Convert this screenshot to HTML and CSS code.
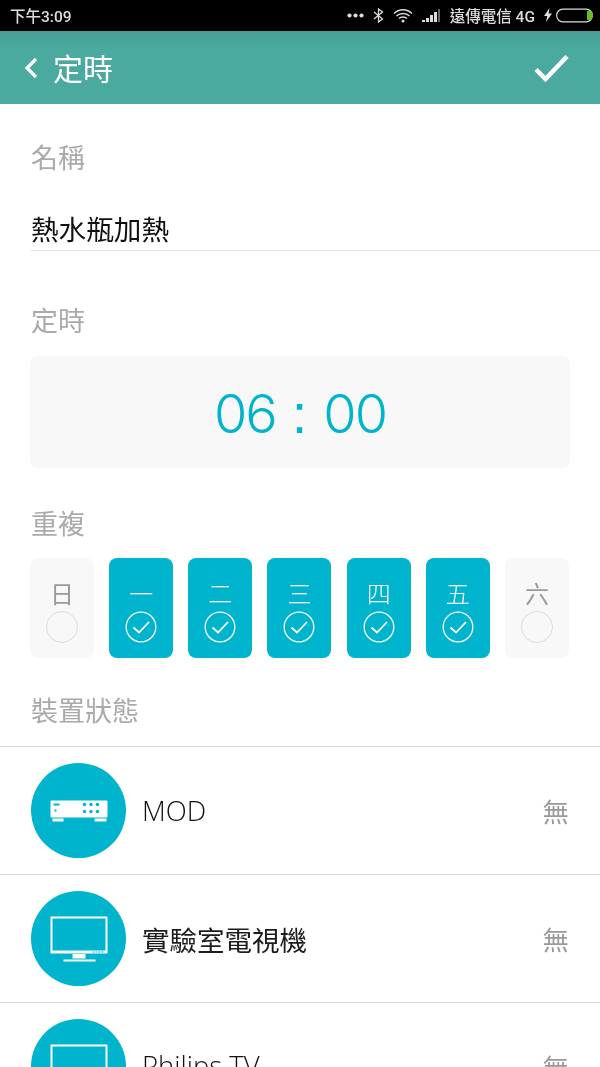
FILE: index.html
```html
<!DOCTYPE html>
<html lang="zh-Hant">

<head>
    <meta charset="UTF-8">
    <meta name="viewport" content="width=device-width, initial-scale=1.0">
    <title>定時</title>
    <link rel="stylesheet" href="styles.css">
</head>

<body>
    <div class="statusbar">
        <span class="clock">下午3:09</span>
        <div class="status-right">
            <svg class="st-dots" width="17" height="5" viewBox="0 0 17 5"><circle cx="2.5" cy="2.5" r="2.1"/><circle cx="8.5" cy="2.5" r="2.1"/><circle cx="14.5" cy="2.5" r="2.1"/></svg>
            <svg class="st-bt" width="11" height="15" viewBox="0 0 11 15"><path d="M1 4l8.5 7L5.5 14V1l4 3L1 11" fill="none" stroke="#ddd" stroke-width="1.3"/></svg>
            <svg class="st-wifi" width="20" height="15" viewBox="0 0 20 15"><g fill="none" stroke="#ddd" stroke-width="1.5"><path d="M1 5.5c5-5 13-5 18 0"/><path d="M3.5 8c3.500-3.500 9.500-3.500 13 0"/><path d="M6 10.500c2-2 6-2 8 0"/></g><circle cx="10" cy="13" r="1.500" fill="#ddd"/></svg>
            <svg class="st-signal" width="19" height="13" viewBox="0 0 19 13"><path d="M0 11h3v2H0zM4 9h3v4H4zM8 6h3v7H8zM12 3h3v10h-3z" fill="#ddd"/><path d="M16 0h2v13h-2z" fill="#666"/></svg>
            <span class="carrier">遠傳電信 4G</span>
            <svg class="st-bolt" width="10" height="14" viewBox="0 0 10 14"><path d="M6.500 0L1 8h3.200L3 14l6-8.500H5.600z" fill="#ddd"/></svg>
            <svg class="st-batt" width="37" height="15" viewBox="0 0 37 15"><rect x=".7" y="1.200" width="35.600" height="12.600" rx="6" fill="none" stroke="#ddd" stroke-width="1.200"/><path d="M31 3h1.500a4.500 4.500 0 0 1 0 9H31z" fill="#5fc31f"/></svg>
        </div>
    </div>

    <header class="topbar">
        <svg class="back" width="14" height="22" viewBox="0 0 14 22"><path d="M12 2l-9 9 9 9" fill="none" stroke="#fff" stroke-width="3.200"/></svg>
        <span class="topbar-title">定時</span>
        <svg class="done" width="38" height="30" viewBox="0 0 38 30"><path d="M3 16.500l9.500 9.500L34 3.500" fill="none" stroke="#fff" stroke-width="4.500"/></svg>
    </header>

    <div class="label label-name">名稱</div>
    <div class="name-input">熱水瓶加熱</div>

    <div class="label label-time">定時</div>
    <div class="time-box">
        <span>06</span>
        <span class="time-colon">:</span>
        <span>00</span>
    </div>

    <div class="label label-repeat">重複</div>
    <div class="days">
        <div class="day">
            <span class="day-name">日</span>
            <span class="day-off"></span>
        </div>
        <div class="day on">
            <span class="day-name">一</span>
            <svg class="tick" width="32" height="32" viewBox="0 0 32 32"><circle cx="16" cy="16" r="14.800"/><path d="M8.500 16.500l5.500 5L24 11" /></svg>
        </div>
        <div class="day on">
            <span class="day-name">二</span>
            <svg class="tick" width="32" height="32" viewBox="0 0 32 32"><circle cx="16" cy="16" r="14.800"/><path d="M8.500 16.500l5.500 5L24 11" /></svg>
        </div>
        <div class="day on">
            <span class="day-name">三</span>
            <svg class="tick" width="32" height="32" viewBox="0 0 32 32"><circle cx="16" cy="16" r="14.800"/><path d="M8.500 16.500l5.500 5L24 11" /></svg>
        </div>
        <div class="day on">
            <span class="day-name">四</span>
            <svg class="tick" width="32" height="32" viewBox="0 0 32 32"><circle cx="16" cy="16" r="14.800"/><path d="M8.500 16.500l5.500 5L24 11" /></svg>
        </div>
        <div class="day on">
            <span class="day-name">五</span>
            <svg class="tick" width="32" height="32" viewBox="0 0 32 32"><circle cx="16" cy="16" r="14.800"/><path d="M8.500 16.500l5.500 5L24 11" /></svg>
        </div>
        <div class="day">
            <span class="day-name">六</span>
            <span class="day-off"></span>
        </div>
    </div>

    <div class="label label-state">裝置狀態</div>
    <div class="devices">
        <div class="device">
            <div class="device-icon">
                <svg width="60" height="24" viewBox="0 0 60 24" fill="#fff"><rect x="1.500" y="1.500" width="57" height="17" rx="1"/><rect x="3.500" y="19.500" width="11" height="3"/><rect x="45.500" y="19.500" width="12" height="3"/><g fill="#00b4cd"><rect x="4.500" y="4.500" width="6" height="2"/><rect x="5.500" y="10.500" width="2" height="2"/><circle cx="35.500" cy="5.500" r="1.700"/><circle cx="42" cy="5.500" r="1.700"/><circle cx="48.500" cy="5.500" r="1.700"/><circle cx="35.500" cy="12.500" r="1.700"/><circle cx="42" cy="12.500" r="1.700"/><circle cx="48.500" cy="12.500" r="1.700"/></g></svg>
            </div>
            <span class="device-name latin">MOD</span>
            <span class="device-state">無</span>
        </div>
        <div class="device">
            <div class="device-icon">
                <svg width="58" height="46" viewBox="0 0 58 46" fill="#fff"><path fill-rule="evenodd" d="M1 .5h56a.5.5 0 0 1 .5.5v36a.5.5 0 0 1-.5.5H1a.5.500 0 0 1-.5-.5V1A.5.500 0 0 1 1 .5zm1.500 2v32h53v-32z"/><path d="M42.500 35.500h2v1h-2zM45.500 35.500h2v1h-2zM48.500 35.500h2v1h-2zM51.500 35.500h2v1h-2z" fill="#00b4cd"/><rect x="22.500" y="38" width="13" height="4.500"/><rect x="13.500" y="43.500" width="32" height="2"/></svg>
            </div>
            <span class="device-name">實驗室電視機</span>
            <span class="device-state">無</span>
        </div>
        <div class="device device-last">
            <div class="device-icon">
                <svg width="58" height="46" viewBox="0 0 58 46" fill="#fff"><path fill-rule="evenodd" d="M1 .5h56a.5.5 0 0 1 .5.5v36a.5.5 0 0 1-.5.5H1a.5.500 0 0 1-.5-.5V1A.5.500 0 0 1 1 .5zm1.500 2v32h53v-32z"/><path d="M42.500 35.500h2v1h-2zM45.500 35.500h2v1h-2zM48.500 35.500h2v1h-2zM51.500 35.500h2v1h-2z" fill="#00b4cd"/><rect x="22.500" y="38" width="13" height="4.500"/><rect x="13.500" y="43.500" width="32" height="2"/></svg>
            </div>
            <span class="device-name latin">Philips TV</span>
            <span class="device-state">無</span>
        </div>
    </div>
</body>

</html>
```
FILE: styles.css
```css
html, body {
    margin: 0;
    padding: 0;
}

body {
    width: 600px;
    height: 1067px;
    overflow: hidden;
    background-color: #fff;
    font-family: "Open Sans", "Noto Sans CJK TC", sans-serif;
    font-weight: 400;
    will-change: transform;
}

.statusbar {
    height: 31px;
    background-color: #000;
    color: #ddd;
    display: flex;
    align-items: center;
    justify-content: space-between;
    padding: 0 7px 1px 10px;
    box-sizing: border-box;
    font-family: "Roboto", "Noto Sans CJK TC", sans-serif;
    font-size: 15.5px;
    font-weight: 500;
}

.status-right {
    display: flex;
    align-items: center;
    gap: 9px;
}

.st-dots {
    fill: #ddd;
}

.carrier {
    margin-right: -1px;
}

.st-bolt {
    margin-right: -6px;
}

.topbar {
    height: 73px;
    background: linear-gradient(#469f95, #4aaa9f 25%);
    display: flex;
    align-items: center;
    padding: 0 29px 0 24px;
    box-sizing: border-box;
    color: #fff;
}

.topbar-title {
    font-size: 30px;
    margin-left: 15px;
    flex: 1;
    margin-bottom: 2px;
}

.label {
    font-size: 27px;
    line-height: 36px;
    color: #aaa;
    padding-left: 31px;
}

.label-name {
    margin-top: 36px;
}

.name-input {
    margin: 35px 0 0 31px;
    height: 40px;
    line-height: 36px;
    box-sizing: border-box;
    border-bottom: 1px solid #e2e2e2;
    font-size: 27.6px;
    color: #111;
}

.label-time {
    margin-top: 52px;
}

.time-box {
    margin: 17px 30px 0;
    height: 112px;
    box-sizing: border-box;
    padding-top: 4px;
    line-height: 108px;
    background-color: #f8f8f8;
    border-radius: 8px;
    display: flex;
    align-items: baseline;
    justify-content: center;
    gap: 16px;
    font-family: "Inter", sans-serif;
    font-size: 54px;
    font-weight: 300;
    letter-spacing: -2px;
    color: #00b4cd;
}

.time-colon {
    font-family: "Liberation Sans", sans-serif;
    font-size: 56px;
    font-weight: 400;
    letter-spacing: 0;
}

.label-repeat {
    margin-top: 38px;
}

.days {
    margin: 16px 31px 0 30px;
    display: flex;
    justify-content: space-between;
}

.day {
    width: 64px;
    height: 100px;
    border-radius: 8px;
    background-color: #f8f8f8;
    display: flex;
    flex-direction: column;
    align-items: center;
    box-sizing: border-box;
    padding-top: 21px;
}

.day.on {
    background-color: #00b4cd;
}

.day-name {
    font-size: 24px;
    line-height: 30px;
    color: #999;
}

.day.on .day-name {
    color: #fff;
    font-weight: 300;
}

.day-off,
.tick {
    width: 32px;
    height: 32px;
    margin-top: 2px;
    box-sizing: border-box;
}

.day-off {
    border: 1.5px solid #ddd;
    border-radius: 50%;
}

.tick {
    fill: none;
    stroke: #fff;
    stroke-width: 1.300;
}

.tick path {
    stroke-width: 1.800;
}

.label-state {
    margin-top: 35px;
}

.devices {
    margin-top: 17px;
    border-top: 1px solid #d8d8d8;
}

.device {
    height: 128px;
    box-sizing: border-box;
    border-bottom: 1px solid #d8d8d8;
    display: flex;
    align-items: center;
    padding: 0 31px;
}

.device-last {
    align-items: flex-start;
    height: 66px;
    padding-top: 16px;
    border-bottom: 0;
    overflow: hidden;
}

.device-last .device-icon {
    flex: none;
}

.device-last .device-name,
.device-last .device-state {
    margin-top: 28px;
}

.device-icon {
    width: 95px;
    height: 95px;
    border-radius: 50%;
    background-color: #00b4cd;
    display: flex;
    align-items: center;
    justify-content: center;
}

.device-name {
    margin-left: 16px;
    font-size: 27.5px;
    color: #1c1c1c;
    flex: 1;
}

.device-name.latin {
    font-weight: 300;
    color: #111;
}

.device-state {
    font-size: 26.500px;
    color: #999;
}
```
